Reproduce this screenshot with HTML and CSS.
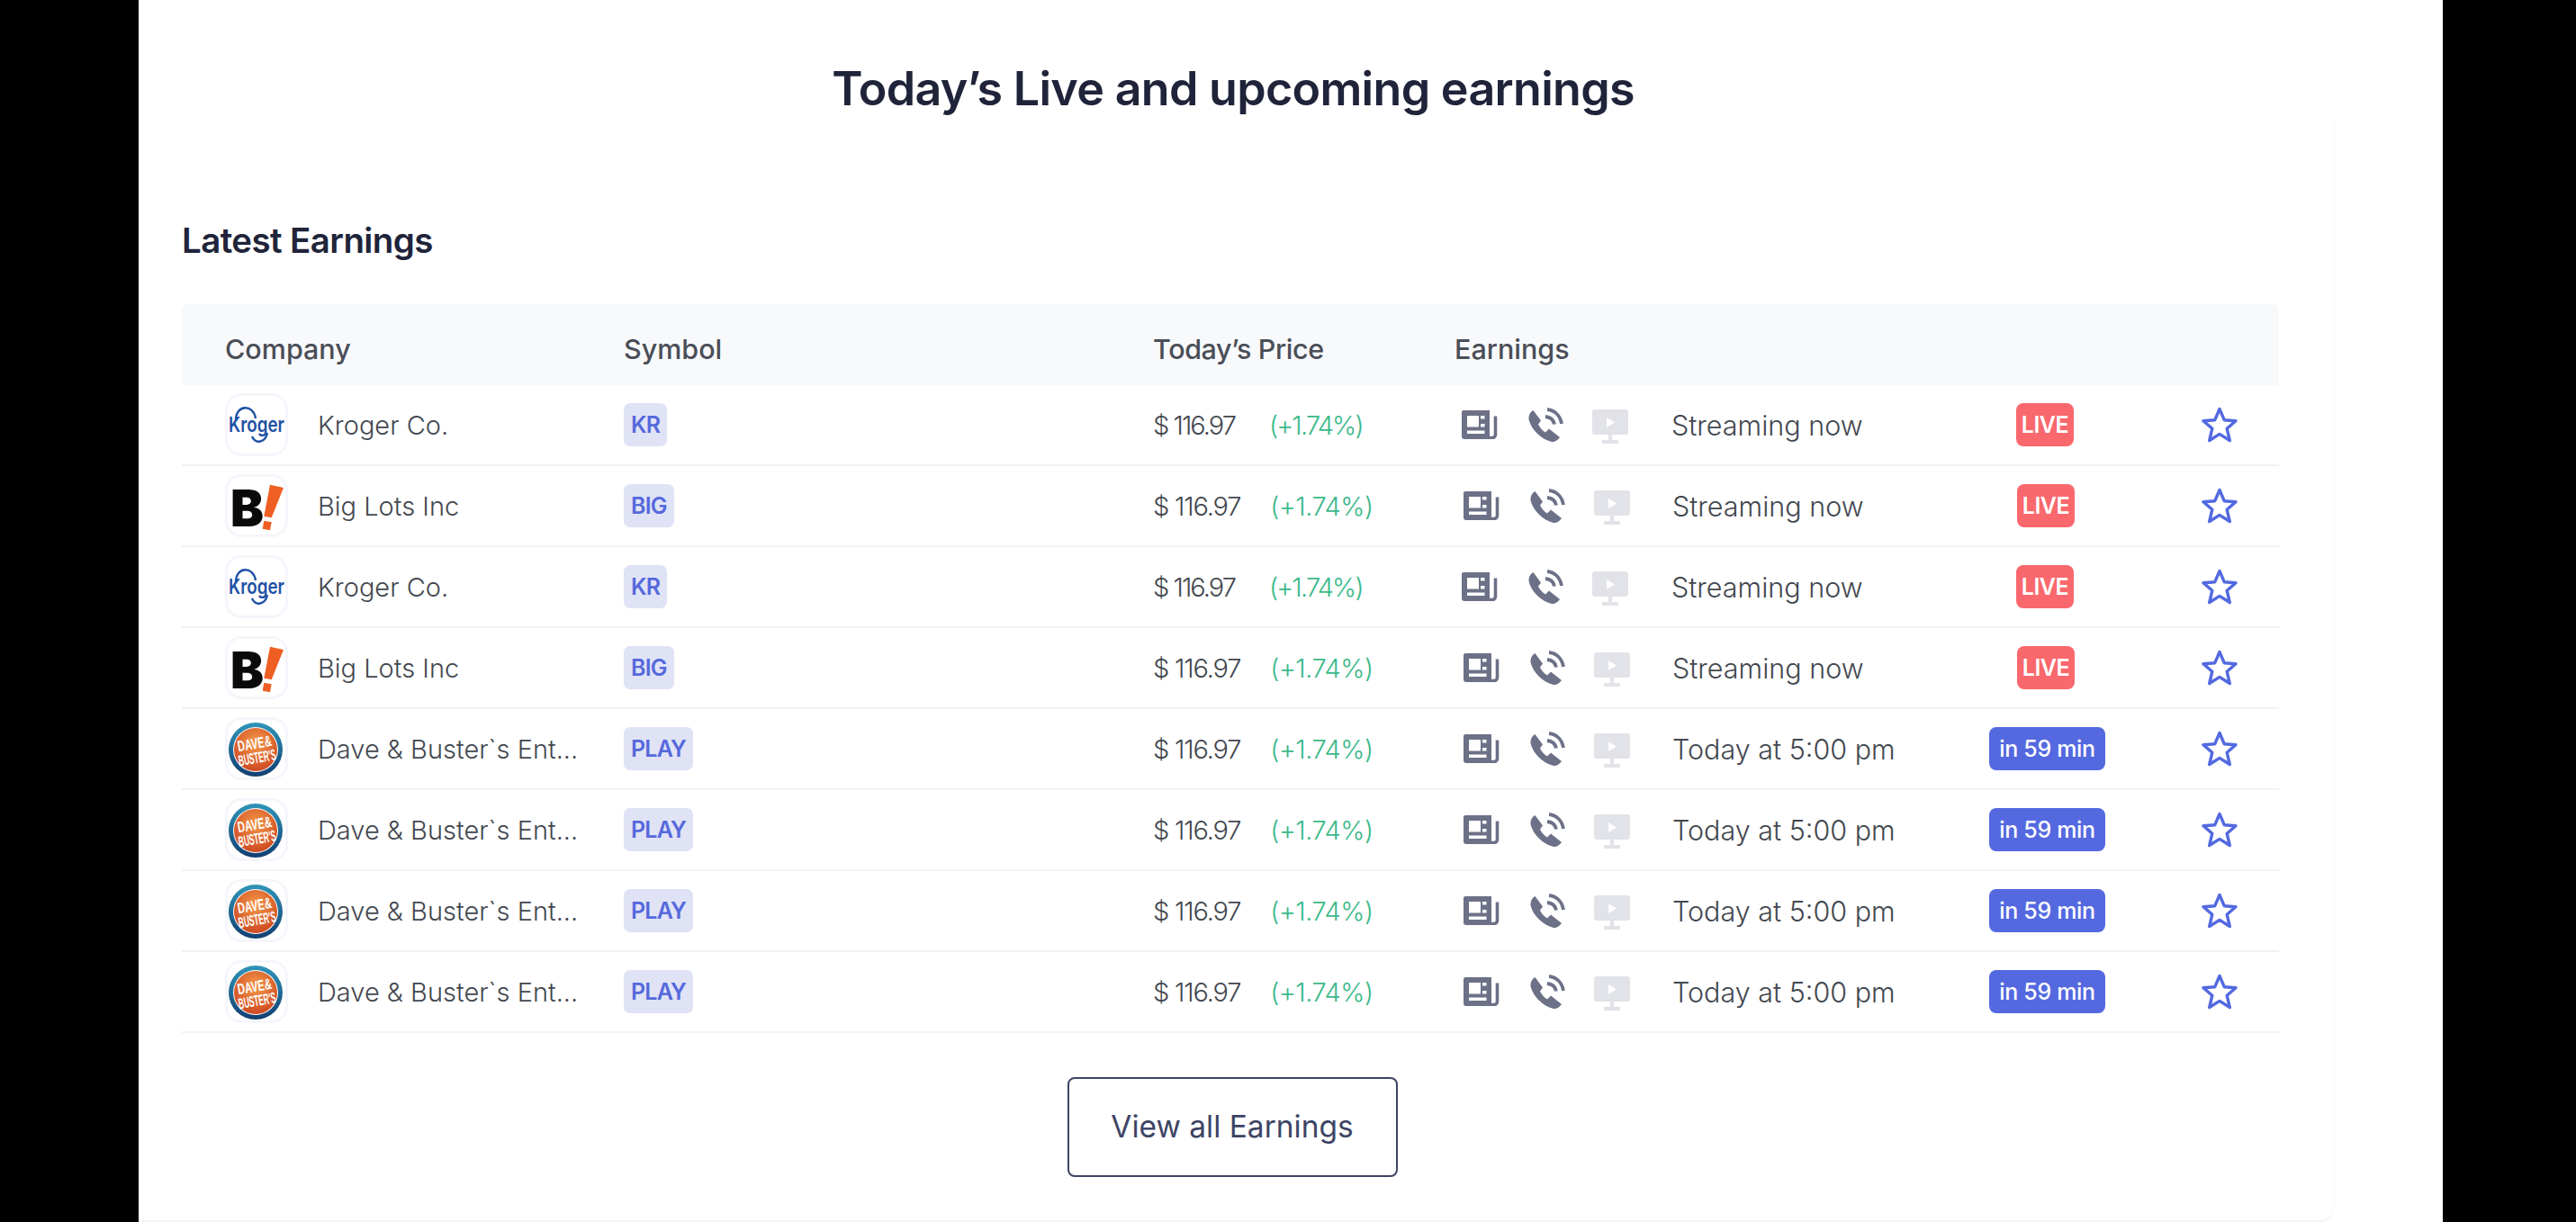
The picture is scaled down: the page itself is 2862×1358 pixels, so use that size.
FILE: index.html
```html
<!doctype html>
<html lang="en">
  <head>
    <meta charset="UTF-8" />
    <title>Today's Live and upcoming earnings</title>
    <link rel="stylesheet" href="styles.css">
  </head>
  <body>
    <!-- shared icons -->
    <svg class="sprite" aria-hidden="true">
      <defs>
        <radialGradient id="dave-fill" cx="50%" cy="35%" r="70%">
          <stop offset="0" stop-color="#f49a48"/>
          <stop offset="1" stop-color="#cc4320"/>
        </radialGradient>
        <linearGradient id="dave-ring" x1="0" y1="0" x2="0" y2="1">
          <stop offset="0" stop-color="#2f95b8"/>
          <stop offset="1" stop-color="#123f72"/>
        </linearGradient>
      </defs>
      <symbol id="i-news" viewBox="0 0 40 32">
        <path fill="#6d7187" fill-rule="evenodd" d="M2 0h29v32H3a3 3 0 0 1-3-3V2a2 2 0 0 1 2-2zM6 6v12.500h13V6zM21 6v3.500h4.500V6zM21 15v3.500h4.500V15zM6 22.500V26h19.500v-3.500z"/>
        <path fill="none" stroke="#6d7187" stroke-width="3.6" d="M37.500 6.500V27a3.500 3.500 0 0 1-3.500 3.500h-3"/>
      </symbol>
      <symbol id="i-phone" viewBox="0 0 39 39">
        <path fill="#6d7187" d="M5.500 3L14 14.500l-3 4c1.500 3.500 4.500 7 8 9l4-4 12 9.500c-3 4-6 5.500-9 5C14 35 3 24 .5 13 .5 8 2 5 5.500 3z"/>
        <path fill="none" stroke="#6d7187" stroke-width="3.800" d="M21 2c8.500 1 14.500 7 16 16"/>
        <path fill="none" stroke="#6d7187" stroke-width="3.800" d="M19 10c5 .5 9 3.500 10 8.500"/>
      </symbol>
      <symbol id="i-screen" viewBox="0 0 40 38">
        <path fill="#e2e3e8" fill-rule="evenodd" d="M3 0h34a3 3 0 0 1 3 3v22a3 3 0 0 1-3 3H22v6h7v4H11v-4h7v-6H3a3 3 0 0 1-3-3V3a3 3 0 0 1 3-3zM16 9v11l9-5.500z"/>
      </symbol>
      <symbol id="i-star" viewBox="0 0 40 40">
        <path fill="none" stroke="#5269e0" stroke-width="3.400" stroke-linejoin="round" d="M20 2.500l5.200 12.200 12.800 1-9.800 8.600 3.100 13.200L20 30.400 8.700 37.500l3.100-13.200L2 15.700l12.800-1z"/>
      </symbol>
    </svg>

    <main class="page">
      <h1 class="title">Today’s Live and upcoming earnings</h1>

      <section class="card">
        <h2 class="card-title">Latest Earnings</h2>

        <div class="earnings-table">
          <div class="row row-head">
            <div>Company</div>
            <div>Symbol</div>
            <div>Today’s Price</div>
            <div>Earnings</div>
          </div>

          <div class="row row-kr">
            <div class="company">
              <span class="logo">
                <svg viewBox="0 0 64 64">
                  <path fill="none" stroke="#1f52a5" stroke-width="2.400" d="M9 27C9 9 29 9 31 25"/>
                  <path fill="none" stroke="#1f52a5" stroke-width="2.400" d="M27 45c4 9 15 7 17-4"/>
                  <text x="1" y="40" class="logo-kroger" textLength="62" lengthAdjust="spacingAndGlyphs">Kroger</text>
                </svg>
              </span>
              <span class="name">Kroger Co.</span>
            </div>
            <div><span class="pill">KR</span></div>
            <div class="price"><span>$ 116.97</span><span class="change">(+1.74%)</span></div>
            <div class="media">
              <svg class="ic-news"><use href="#i-news"/></svg>
              <svg class="ic-phone"><use href="#i-phone"/></svg>
              <svg class="ic-screen"><use href="#i-screen"/></svg>
            </div>
            <div class="when">Streaming now</div>
            <div><span class="badge badge-live">LIVE</span></div>
            <svg class="star"><use href="#i-star"/></svg>
          </div>

          <div class="row">
            <div class="company">
              <span class="logo">
                <svg viewBox="0 0 64 64">
                  <text x="3" y="55" class="logo-big" textLength="37" lengthAdjust="spacingAndGlyphs">B</text>
                  <path fill="#ef5f23" d="M47 8.700L62 12 48.700 45.300l-8.400-1.600zM40.300 48.700l8.400 1.600-1.700 9-8.300-1.600z"/>
                </svg>
              </span>
              <span class="name">Big Lots Inc</span>
            </div>
            <div><span class="pill">BIG</span></div>
            <div class="price"><span>$ 116.97</span><span class="change">(+1.74%)</span></div>
            <div class="media">
              <svg class="ic-news"><use href="#i-news"/></svg>
              <svg class="ic-phone"><use href="#i-phone"/></svg>
              <svg class="ic-screen"><use href="#i-screen"/></svg>
            </div>
            <div class="when">Streaming now</div>
            <div><span class="badge badge-live">LIVE</span></div>
            <svg class="star"><use href="#i-star"/></svg>
          </div>

          <div class="row row-kr">
            <div class="company">
              <span class="logo">
                <svg viewBox="0 0 64 64">
                  <path fill="none" stroke="#1f52a5" stroke-width="2.400" d="M9 27C9 9 29 9 31 25"/>
                  <path fill="none" stroke="#1f52a5" stroke-width="2.400" d="M27 45c4 9 15 7 17-4"/>
                  <text x="1" y="40" class="logo-kroger" textLength="62" lengthAdjust="spacingAndGlyphs">Kroger</text>
                </svg>
              </span>
              <span class="name">Kroger Co.</span>
            </div>
            <div><span class="pill">KR</span></div>
            <div class="price"><span>$ 116.97</span><span class="change">(+1.74%)</span></div>
            <div class="media">
              <svg class="ic-news"><use href="#i-news"/></svg>
              <svg class="ic-phone"><use href="#i-phone"/></svg>
              <svg class="ic-screen"><use href="#i-screen"/></svg>
            </div>
            <div class="when">Streaming now</div>
            <div><span class="badge badge-live">LIVE</span></div>
            <svg class="star"><use href="#i-star"/></svg>
          </div>

          <div class="row">
            <div class="company">
              <span class="logo">
                <svg viewBox="0 0 64 64">
                  <text x="3" y="55" class="logo-big" textLength="37" lengthAdjust="spacingAndGlyphs">B</text>
                  <path fill="#ef5f23" d="M47 8.700L62 12 48.700 45.300l-8.400-1.600zM40.300 48.700l8.400 1.600-1.700 9-8.300-1.600z"/>
                </svg>
              </span>
              <span class="name">Big Lots Inc</span>
            </div>
            <div><span class="pill">BIG</span></div>
            <div class="price"><span>$ 116.97</span><span class="change">(+1.74%)</span></div>
            <div class="media">
              <svg class="ic-news"><use href="#i-news"/></svg>
              <svg class="ic-phone"><use href="#i-phone"/></svg>
              <svg class="ic-screen"><use href="#i-screen"/></svg>
            </div>
            <div class="when">Streaming now</div>
            <div><span class="badge badge-live">LIVE</span></div>
            <svg class="star"><use href="#i-star"/></svg>
          </div>

          <div class="row">
            <div class="company">
              <span class="logo">
                <svg viewBox="0 0 64 64">
                  <circle cx="31" cy="33" r="30" fill="url(#dave-ring)"/>
                  <circle cx="31" cy="33" r="25" fill="#fff"/>
                  <circle cx="31" cy="33" r="24" fill="url(#dave-fill)"/>
                  <g transform="rotate(-10 31 33)">
                    <text x="31" y="32" class="logo-dave" text-anchor="middle" textLength="38" lengthAdjust="spacingAndGlyphs">DAVE&amp;</text>
                    <text x="31" y="48" class="logo-dave" text-anchor="middle" textLength="42" lengthAdjust="spacingAndGlyphs">BUSTER'S</text>
                  </g>
                </svg>
              </span>
              <span class="name">Dave &amp; Buster`s Ent...</span>
            </div>
            <div><span class="pill">PLAY</span></div>
            <div class="price"><span>$ 116.97</span><span class="change">(+1.74%)</span></div>
            <div class="media">
              <svg class="ic-news"><use href="#i-news"/></svg>
              <svg class="ic-phone"><use href="#i-phone"/></svg>
              <svg class="ic-screen"><use href="#i-screen"/></svg>
            </div>
            <div class="when">Today at 5:00 pm</div>
            <div><span class="badge badge-soon">in 59 min</span></div>
            <svg class="star"><use href="#i-star"/></svg>
          </div>

          <div class="row">
            <div class="company">
              <span class="logo">
                <svg viewBox="0 0 64 64">
                  <circle cx="31" cy="33" r="30" fill="url(#dave-ring)"/>
                  <circle cx="31" cy="33" r="25" fill="#fff"/>
                  <circle cx="31" cy="33" r="24" fill="url(#dave-fill)"/>
                  <g transform="rotate(-10 31 33)">
                    <text x="31" y="32" class="logo-dave" text-anchor="middle" textLength="38" lengthAdjust="spacingAndGlyphs">DAVE&amp;</text>
                    <text x="31" y="48" class="logo-dave" text-anchor="middle" textLength="42" lengthAdjust="spacingAndGlyphs">BUSTER'S</text>
                  </g>
                </svg>
              </span>
              <span class="name">Dave &amp; Buster`s Ent...</span>
            </div>
            <div><span class="pill">PLAY</span></div>
            <div class="price"><span>$ 116.97</span><span class="change">(+1.74%)</span></div>
            <div class="media">
              <svg class="ic-news"><use href="#i-news"/></svg>
              <svg class="ic-phone"><use href="#i-phone"/></svg>
              <svg class="ic-screen"><use href="#i-screen"/></svg>
            </div>
            <div class="when">Today at 5:00 pm</div>
            <div><span class="badge badge-soon">in 59 min</span></div>
            <svg class="star"><use href="#i-star"/></svg>
          </div>

          <div class="row">
            <div class="company">
              <span class="logo">
                <svg viewBox="0 0 64 64">
                  <circle cx="31" cy="33" r="30" fill="url(#dave-ring)"/>
                  <circle cx="31" cy="33" r="25" fill="#fff"/>
                  <circle cx="31" cy="33" r="24" fill="url(#dave-fill)"/>
                  <g transform="rotate(-10 31 33)">
                    <text x="31" y="32" class="logo-dave" text-anchor="middle" textLength="38" lengthAdjust="spacingAndGlyphs">DAVE&amp;</text>
                    <text x="31" y="48" class="logo-dave" text-anchor="middle" textLength="42" lengthAdjust="spacingAndGlyphs">BUSTER'S</text>
                  </g>
                </svg>
              </span>
              <span class="name">Dave &amp; Buster`s Ent...</span>
            </div>
            <div><span class="pill">PLAY</span></div>
            <div class="price"><span>$ 116.97</span><span class="change">(+1.74%)</span></div>
            <div class="media">
              <svg class="ic-news"><use href="#i-news"/></svg>
              <svg class="ic-phone"><use href="#i-phone"/></svg>
              <svg class="ic-screen"><use href="#i-screen"/></svg>
            </div>
            <div class="when">Today at 5:00 pm</div>
            <div><span class="badge badge-soon">in 59 min</span></div>
            <svg class="star"><use href="#i-star"/></svg>
          </div>

          <div class="row">
            <div class="company">
              <span class="logo">
                <svg viewBox="0 0 64 64">
                  <circle cx="31" cy="33" r="30" fill="url(#dave-ring)"/>
                  <circle cx="31" cy="33" r="25" fill="#fff"/>
                  <circle cx="31" cy="33" r="24" fill="url(#dave-fill)"/>
                  <g transform="rotate(-10 31 33)">
                    <text x="31" y="32" class="logo-dave" text-anchor="middle" textLength="38" lengthAdjust="spacingAndGlyphs">DAVE&amp;</text>
                    <text x="31" y="48" class="logo-dave" text-anchor="middle" textLength="42" lengthAdjust="spacingAndGlyphs">BUSTER'S</text>
                  </g>
                </svg>
              </span>
              <span class="name">Dave &amp; Buster`s Ent...</span>
            </div>
            <div><span class="pill">PLAY</span></div>
            <div class="price"><span>$ 116.97</span><span class="change">(+1.74%)</span></div>
            <div class="media">
              <svg class="ic-news"><use href="#i-news"/></svg>
              <svg class="ic-phone"><use href="#i-phone"/></svg>
              <svg class="ic-screen"><use href="#i-screen"/></svg>
            </div>
            <div class="when">Today at 5:00 pm</div>
            <div><span class="badge badge-soon">in 59 min</span></div>
            <svg class="star"><use href="#i-star"/></svg>
          </div>
        </div>

        <div class="actions">
          <a class="btn-outline">View all Earnings</a>
        </div>
      </section>
    </main>
  </body>
</html>
```

FILE: styles.css
```css
body {
  margin: 0;
  height: 1358px;
  overflow: hidden;
  padding: 0 148px 0 154px;
  box-sizing: border-box;
  background-color: #000;
  font-family: "Inter", "Liberation Sans", sans-serif;
  color: #43474f;
}
.sprite {
  display: block;
  width: 0;
  height: 0;
}
.page {
  height: 100%;
  padding-top: 66px;
  box-sizing: border-box;
  background-color: #fff;
}
.title {
  margin: 0;
  width: 2432px;
  text-align: center;
  font-size: 52px;
  line-height: 66px;
  font-weight: 600;
  letter-spacing: -0.7px;
  color: #20243a;
}
.card {
  width: 2440px;
  height: 1226px;
  padding: 111px 0 0 48px;
  box-sizing: border-box;
  border-right: 2px solid #fcfcfd;
  border-bottom: 2px solid #f4f5f8;
  border-bottom-right-radius: 16px;
}
.card-title {
  margin: 0 0 47px;
  font-size: 38.5px;
  line-height: 48px;
  font-weight: 600;
  letter-spacing: -0.6px;
  color: #20243a;
}

/* Table rows share one grid */
.earnings-table {
  width: 2330px;
}
.row {
  display: grid;
  grid-template-columns: 443px 588px 345px 232px 353px 130px 1fr;
  align-items: center;
  height: 90px;
  padding-left: 48px;
  box-sizing: border-box;
  border-bottom: 2px solid #f1f2f6;
  font-size: 29px;
}
.row-kr {
  grid-template-columns: 443px 588px 343px 233px 353px 130px 1fr;
}
.row-head {
  grid-template-columns: 443px 588px 335px 1fr;
  padding-top: 8px;
  background-color: #f8f9fb;
  border-bottom: none;
  border-radius: 8px 8px 0 0;
  font-size: 30.5px;
  font-weight: 500;
  color: #4a4e57;
}
.row-head div:nth-child(3) {
  letter-spacing: -0.4px;
}
.company {
  display: flex;
  align-items: center;
  gap: 33px;
}
.logo {
  width: 70px;
  height: 70px;
  box-sizing: border-box;
  border: 3px solid #f5f6fb;
  border-radius: 18px;
  background-color: #fff;
  flex-shrink: 0;
}
.logo svg {
  display: block;
  width: 100%;
  height: 100%;
  overflow: visible;
}
.logo-kroger {
  font-size: 23px;
  font-weight: 600;
  fill: #1f52a5;
}
.logo-big {
  font-size: 56px;
  font-weight: 900;
  fill: #0a0a0a;
}
.logo-dave {
  font-family: "Liberation Sans", sans-serif;
  font-size: 17px;
  font-weight: 700;
  fill: #fff;
}
.name {
  font-weight: 300;
  white-space: nowrap;
}
.pill {
  display: inline-block;
  height: 48px;
  padding: 0 8px;
  border-radius: 7px;
  background-color: #e0e3f6;
  color: #5669dc;
  font-size: 25px;
  line-height: 48px;
  font-weight: 600;
  letter-spacing: -0.8px;
}
.price {
  display: flex;
  gap: 33px;
  font-weight: 300;
  letter-spacing: -1.2px;
}
.row-kr .price {
  gap: 38px;
  letter-spacing: -2px;
}
.change {
  color: #3bb98a;
  letter-spacing: -0.5px;
}
.row-kr .change {
  letter-spacing: -1.8px;
}
.media {
  display: flex;
  align-items: center;
}
.ic-news {
  width: 40px;
  height: 32px;
}
.ic-phone {
  width: 39px;
  height: 39px;
  margin-left: 34px;
}
.ic-screen {
  width: 40px;
  height: 38px;
  margin: 4px 0 0 32px;
}
.when {
  font-size: 30.5px;
  font-weight: 300;
  white-space: nowrap;
}
.badge {
  display: inline-block;
  height: 48px;
  border-radius: 8px;
  color: #fff;
  font-size: 25px;
  line-height: 48px;
  font-weight: 600;
  text-align: center;
  vertical-align: middle;
}
.badge-live {
  width: 64px;
  margin-left: 30px;
  background-color: #f9686d;
  letter-spacing: -0.5px;
}
.badge-soon {
  width: 129px;
  margin-left: -1px;
  background-color: #5469e0;
  font-weight: 500;
  letter-spacing: -0.3px;
}
.star {
  width: 40px;
  height: 40px;
  justify-self: end;
  margin-right: 46px;
}
.actions {
  display: flex;
  justify-content: center;
  width: 2330px;
  margin: 49px 0 0 2px;
}
.btn-outline {
  width: 367px;
  height: 111px;
  box-sizing: border-box;
  border: 2px solid #3d4465;
  border-radius: 8px;
  color: #3d4465;
  font-size: 33.5px;
  line-height: 107px;
  font-weight: 400;
  text-align: center;
}
```
